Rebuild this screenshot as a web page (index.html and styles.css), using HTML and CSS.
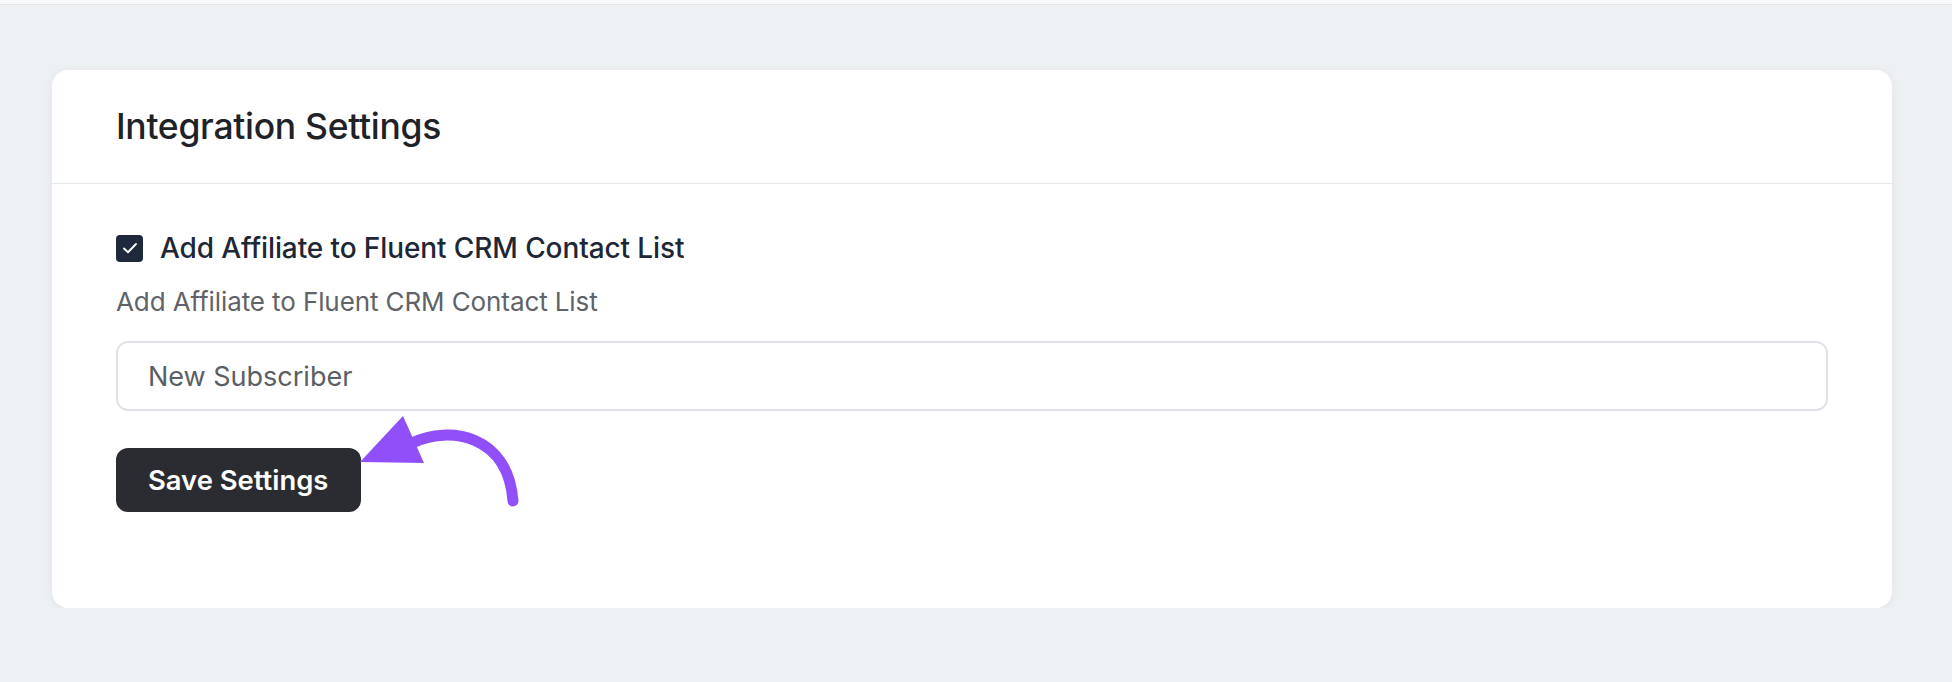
FILE: index.html
```html
<!DOCTYPE html>
<html lang="en">
<head>
    <meta charset="UTF-8">
    <meta name="viewport" content="width=device-width, initial-scale=1.0">
    <title>Integration Settings</title>
    <link rel="stylesheet" href="styles.css">
</head>
<body>
    <div class="topbar"></div>

    <div class="page">
        <div class="settings-card">
            <div class="settings-header">
                <h2 class="settings-title">Integration Settings</h2>
            </div>

            <div class="settings-body">
                <label class="check-row">
                    <span class="check-box">
                        <svg width="20" height="20" viewBox="0 0 16 16">
                            <path d="M3.2 8.4 L6.4 11.4 L12.8 4.8" fill="none" stroke="#ffffff" stroke-width="1.5" stroke-linecap="round" stroke-linejoin="round"/>
                        </svg>
                    </span>
                    <span class="check-label">Add Affiliate to Fluent CRM Contact List</span>
                </label>

                <p class="field-help">Add Affiliate to Fluent CRM Contact List</p>

                <div class="text-field">New Subscriber</div>

                <div class="action-row">
                    <button class="save-btn">Save Settings</button>
                    <!-- pointer arrow over the button -->
                    <svg class="pointer-arrow" width="180" height="110" viewBox="0 0 180 110">
                        <path d="M62 38 C100 20, 158 30, 163 96" fill="none" stroke="#914ff9" stroke-width="11" stroke-linecap="round"/>
                        <polygon points="10,57 53,11 74,58" fill="#914ff9"/>
                    </svg>
                </div>
            </div>
        </div>
    </div>
</body>
</html>
```

FILE: styles.css
```css
/* Base */
* {
    margin: 0;
    padding: 0;
    box-sizing: border-box;
}

body {
    background-color: #eef1f4;
    font-family: 'Inter', 'Helvetica Neue', 'Liberation Sans', sans-serif;
    color: #1d2129;
    width: 100%;
    overflow: hidden;
}

.topbar {
    height: 5px;
    background-color: #f7f8fa;
    border-bottom: 1px solid #e2e5e9;
}

.page {
    padding: 65px 60px 0 52px;
}

/* Card */
.settings-card {
    background-color: #ffffff;
    border-radius: 16px;
    box-shadow: 0 1px 8px rgba(20, 30, 50, 0.07);
}

.settings-header {
    height: 114px;
    padding: 0 64px;
    display: flex;
    align-items: center;
    border-bottom: 1px solid #e4e7eb;
}

.settings-title {
    font-size: 35.5px;
    font-weight: 500;
    color: #1f2226;
    letter-spacing: -0.3px;
}

.settings-body {
    padding: 50px 64px 96px;
    display: flex;
    flex-direction: column;
}

/* Checkbox row */
.check-row {
    display: flex;
    align-items: center;
    gap: 17px;
    height: 28px;
}

.check-box {
    width: 27px;
    height: 27px;
    border-radius: 4px;
    background-color: #1e293b;
    display: flex;
    align-items: center;
    justify-content: center;
}

.check-label {
    font-size: 28px;
    font-weight: 500;
    color: #1e2735;
    letter-spacing: -0.1px;
}

.field-help {
    margin-top: 26px;
    font-size: 26px;
    line-height: 28px;
    color: #5f6368;
    letter-spacing: -0.1px;
}

/* Input */
.text-field {
    margin-top: 25px;
    height: 70px;
    border: 2px solid #e0e2e7;
    border-radius: 12px;
    padding: 0 30px;
    display: flex;
    align-items: center;
    font-size: 27px;
    color: #5b5e63;
}

/* Button */
.action-row {
    margin-top: 37px;
    position: relative;
}

.save-btn {
    width: 245px;
    height: 64px;
    border: none;
    border-radius: 12px;
    background-color: #2b2c32;
    color: #ffffff;
    font-family: inherit;
    font-size: 27.4px;
    font-weight: 600;
    text-align: left;
    padding-left: 32px;
    cursor: pointer;
}

.pointer-arrow {
    position: absolute;
    left: 234px;
    top: -43px;
}
```
